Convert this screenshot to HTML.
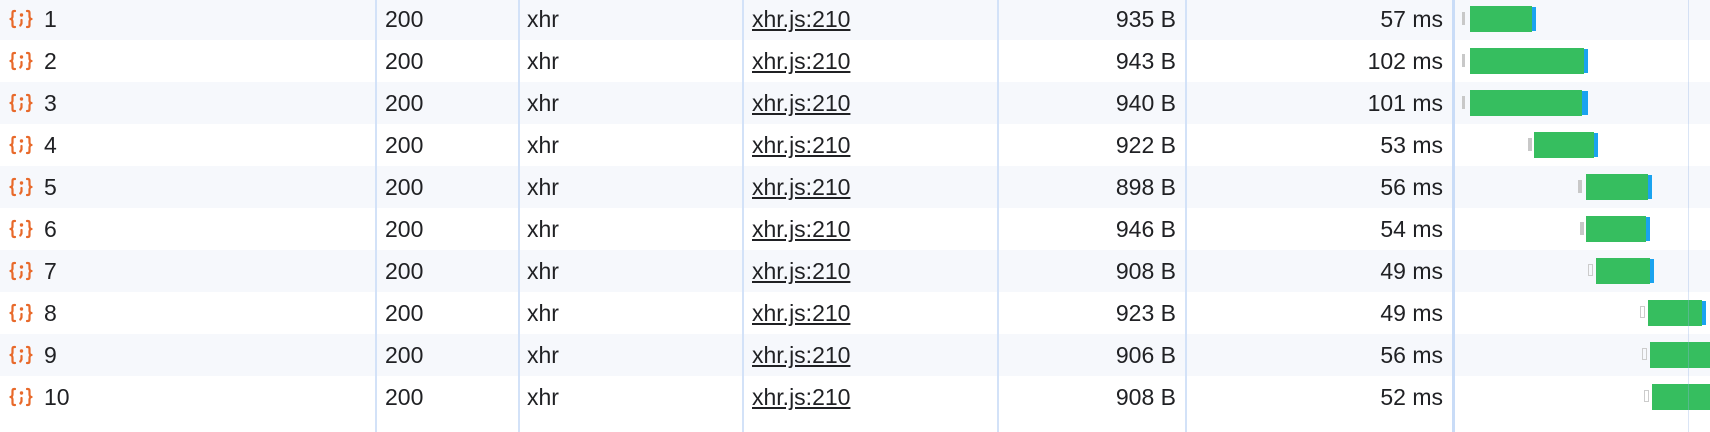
<!DOCTYPE html>
<html><head><style>
body{margin:0;width:1710px;height:432px;overflow:hidden;background:#fff;font-family:"Liberation Sans",Arial,sans-serif;font-size:23px;color:#202124;position:relative}
.row{position:absolute;left:0;width:1710px;height:42px}
.row.alt{background:#f6f8fc}
.t{position:absolute;top:0;line-height:42px;white-space:nowrap}
.r{text-align:right}
.vl{position:absolute;top:0;height:432px;width:2px;background:#d3e2f8}
.ic{position:absolute;left:9px;top:11px}
a{color:#202124;text-decoration:underline}
.g{position:absolute;background:#36be5f;height:26px;top:8px}
.b{position:absolute;background:#1aa3ef;height:24px;top:9px;width:4px}
.w{position:absolute;background:#c8c8c8;height:13px;top:14px;width:4px}
.wo{position:absolute;border:1.5px solid #ccc;height:10px;top:14px;width:3px;box-sizing:content-box}
</style></head><body>
<div id="c"></div>
<script>
const d=[[1,935,57],[2,943,102],[3,940,101],[4,922,53],[5,898,56],[6,946,54],[7,908,49],[8,923,49],[9,906,56],[10,908,52]];
const bars=[
[1462,'w',1470,1532,1536],[1462,'w',1470,1584,1588],[1462,'w',1470,1582,1588],
[1528,'w',1534,1594,1598],[1578,'w',1586,1648,1652],[1580,'w',1586,1646,1650],
[1588,'o',1596,1650,1654],[1640,'o',1648,1702,1706],[1642,'o',1650,1710,0],[1644,'o',1652,1710,0]];
const icon=`<svg class="ic" width="24" height="20" viewBox="0 0 24 20" fill="none" stroke="#e8692a" stroke-width="2.2" stroke-linecap="round" stroke-linejoin="round"><path d="M6 2H5C3.8 2 3.5 3 3.5 4v3.5C3.5 9 2.5 10 1.5 10c1 0 2 1 2 2.5V16c0 1 .3 2 1.5 2h1"/><path d="M18 2h1c1.2 0 1.5 1 1.5 2v3.5c0 1.5 1 2.5 2 2.5-1 0-2 1-2 2.5V16c0 1-.3 2-1.5 2h-1"/><circle cx="12.5" cy="6" r="0.6" fill="#e8692a"/><path d="M12.5 11v3.5l-1.2 2"/></svg>`;
let h='';
d.forEach((r,i)=>{const top=-2+42*i;const B=bars[i];
h+=`<div class="row${i%2==0?' alt':''}" style="top:${top}px">
${icon}
<div class="t" style="left:44px">${r[0]}</div>
<div class="t" style="left:385px">200</div>
<div class="t" style="left:527px">xhr</div>
<div class="t" style="left:752px"><a>xhr.js:210</a></div>
<div class="t r" style="left:1000px;width:176px">${r[1]} B</div>
<div class="t r" style="left:1200px;width:243px">${r[2]} ms</div>
<div class="${B[1]=='w'?'w':'wo'}" style="left:${B[0]}px${B[1]=='w'&&i<3?';width:3px':''}"></div>
<div class="g" style="left:${B[2]}px;width:${B[3]-B[2]}px"></div>
${B[4]?`<div class="b" style="left:${B[3]}px;width:${B[4]-B[3]}px"></div>`:''}
</div>`;});
[375,518,742,997,1185].forEach(x=>h+=`<div class="vl" style="left:${x}px"></div>`);
h+=`<div class="vl" style="left:1452px;width:3px;background:#c9dcf7"></div>`;
h+=`<div class="vl" style="left:1688px;width:1px;background:rgba(150,180,230,0.35)"></div>`;
document.getElementById('c').innerHTML=h;
</script>
</body></html>
